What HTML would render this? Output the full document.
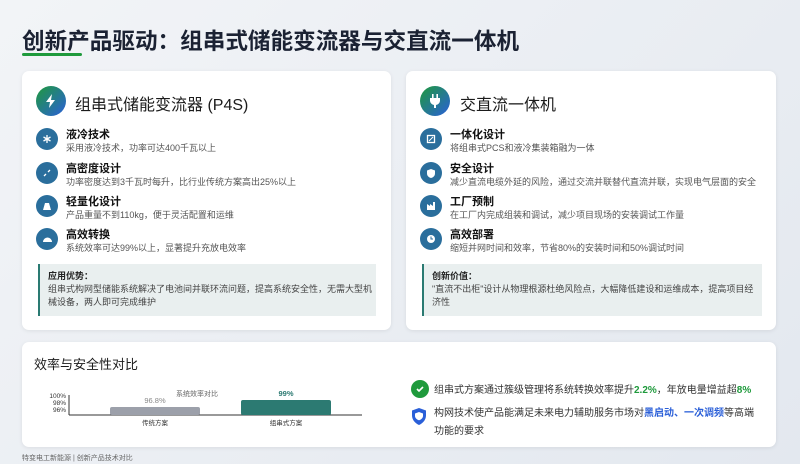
<!DOCTYPE html>
<html><head><meta charset="utf-8"><style>
*{margin:0;padding:0;box-sizing:border-box}
body{width:800px;height:464px;overflow:hidden;background:linear-gradient(135deg,#f2f4f7,#e3e8ef);font-family:"Liberation Sans","Noto Sans CJK SC",sans-serif;color:#222;position:relative}
.t{position:absolute;left:22px;top:23px;font-size:22.6px;font-weight:bold;color:#1b2233}
.ul{position:absolute;left:22px;top:53px;width:60px;height:3px;background:#1f9a3c;border-radius:2px}
.card{position:absolute;background:#fff;border-radius:7px;box-shadow:0 1px 4px rgba(0,0,0,.08)}
.hic{position:absolute;width:30px;height:30px;border-radius:50%;background:linear-gradient(135deg,#1f9a3c,#2a5fd8);display:flex;align-items:center;justify-content:center}
.h{position:absolute;font-size:16px;color:#1b1b1b}
.it{position:absolute;left:14px}
.ic{position:absolute;left:0;top:1px;width:22px;height:22px;border-radius:50%;background:#2a6e9c;display:flex;align-items:center;justify-content:center}
.it b{position:absolute;left:30px;top:-1px;font-size:11px;white-space:nowrap;color:#111}
.it span{position:absolute;left:30px;top:14px;font-size:9px;white-space:nowrap;color:#555}
.note{position:absolute;left:16px;top:193px;background:#e9efef;border-left:2px solid #2a7a72;padding:6px 2px 6px 8px;font-size:9px;color:#444;line-height:13px;height:52px}
.note b{color:#222}
</style></head><body>
<div class="t">创新产品驱动：组串式储能变流器与交直流一体机</div>
<div class="ul"></div>

<div class="card" style="left:22px;top:71px;width:369px;height:259px">
 <div class="hic" style="left:14px;top:15px"><svg width="14" height="16" viewBox="0 0 14 16"><path d="M8 1L2 9h4l-1 6 6-8H7z" fill="#fff"/></svg></div>
 <div class="h" style="left:53px;top:20px">组串式储能变流器 (P4S)</div>
 <div class="it" style="top:56px"><div class="ic"><svg width="10" height="10" viewBox="0 0 10 10" stroke="#fff" stroke-width="1.3"><path d="M5 1v8M1.5 3l7 4M8.5 3l-7 4"/></svg></div><b>液冷技术</b><span>采用液冷技术，功率可达400千瓦以上</span></div>
 <div class="it" style="top:90px"><div class="ic"><svg width="10" height="10" viewBox="0 0 10 10" stroke="#fff" stroke-width="1.3"><path d="M2 8l2-2M8 2L6 4"/></svg></div><b>高密度设计</b><span>功率密度达到3千瓦时每升，比行业传统方案高出25%以上</span></div>
 <div class="it" style="top:123px"><div class="ic"><svg width="10" height="10" viewBox="0 0 10 10"><path d="M3 2h4l2 7H1z" fill="#fff"/></svg></div><b>轻量化设计</b><span>产品重量不到110kg，便于灵活配置和运维</span></div>
 <div class="it" style="top:156px"><div class="ic"><svg width="11" height="10" viewBox="0 0 11 10"><path d="M1 8a4.5 4.5 0 0 1 9 0z" fill="#fff"/></svg></div><b>高效转换</b><span>系统效率可达99%以上，显著提升充放电效率</span></div>
 <div class="note" style="width:338px"><b>应用优势：</b><br>组串式构网型储能系统解决了电池间并联环流问题，提高系统安全性，无需大型机械设备，两人即可完成维护</div>
</div>

<div class="card" style="left:406px;top:71px;width:370px;height:259px">
 <div class="hic" style="left:14px;top:15px"><svg width="14" height="16" viewBox="0 0 14 16" fill="#fff"><rect x="4" y="1" width="1.6" height="4"/><rect x="8.4" y="1" width="1.6" height="4"/><path d="M2 5h10v3a5 5 0 0 1-4 4v3H6v-3a5 5 0 0 1-4-4z"/></svg></div>
 <div class="h" style="left:54px;top:20px">交直流一体机</div>
 <div class="it" style="top:56px"><div class="ic"><svg width="10" height="10" viewBox="0 0 10 10"><rect x="1.5" y="1.5" width="7" height="7" fill="none" stroke="#fff" stroke-width="1.3"/><path d="M3 7l4-4" stroke="#fff"/></svg></div><b>一体化设计</b><span>将组串式PCS和液冷集装箱融为一体</span></div>
 <div class="it" style="top:90px"><div class="ic"><svg width="10" height="11" viewBox="0 0 10 11"><path d="M5 1l4 1.5v3c0 2.5-2 4-4 4.5C3 9.5 1 8 1 5.5v-3z" fill="#fff"/></svg></div><b>安全设计</b><span>减少直流电缆外延的风险，通过交流并联替代直流并联，实现电气层面的安全</span></div>
 <div class="it" style="top:123px"><div class="ic"><svg width="10" height="10" viewBox="0 0 10 10"><path d="M1 9V3l3 2V3l3 2V1h2v8z" fill="#fff"/></svg></div><b>工厂预制</b><span>在工厂内完成组装和调试，减少项目现场的安装调试工作量</span></div>
 <div class="it" style="top:156px"><div class="ic"><svg width="10" height="10" viewBox="0 0 10 10"><circle cx="5" cy="5" r="4" fill="#fff"/><path d="M5 2.5V5h2" stroke="#2a6e9c" fill="none"/></svg></div><b>高效部署</b><span>缩短并网时间和效率，节省80%的安装时间和50%调试时间</span></div>
 <div class="note" style="width:340px"><b>创新价值：</b><br>"直流不出柜"设计从物理根源杜绝风险点，大幅降低建设和运维成本，提高项目经济性</div>
</div>

<div class="card" style="left:22px;top:342px;width:754px;height:105px">
 <div style="position:absolute;left:12px;top:12px;font-size:13px;color:#1b1b1b">效率与安全性对比</div>
 <svg style="position:absolute;left:0;top:40px" width="380" height="50" viewBox="0 0 380 50" font-family="Liberation Sans,Noto Sans CJK SC,sans-serif">
  <text x="175" y="14" font-size="7" fill="#666" text-anchor="middle">系统效率对比</text>
  <text x="44" y="16" font-size="6.5" fill="#333" text-anchor="end">100%</text>
  <text x="44" y="23" font-size="6.5" fill="#333" text-anchor="end">98%</text>
  <text x="44" y="30" font-size="6.5" fill="#333" text-anchor="end">96%</text>
  <line x1="47" y1="13" x2="47" y2="33" stroke="#333"/>
  <line x1="47" y1="33" x2="340" y2="33" stroke="#333"/>
  <rect x="88" y="25" width="90" height="8" rx="2" fill="#9ca0aa"/>
  <rect x="219" y="18" width="90" height="15" rx="2" fill="#2c7a72"/>
  <text x="133" y="21" font-size="7.5" fill="#888" text-anchor="middle">96.8%</text>
  <text x="264" y="14" font-size="7.5" fill="#2c7a72" text-anchor="middle" font-weight="bold">99%</text>
  <text x="133" y="43" font-size="6.5" fill="#333" text-anchor="middle">传统方案</text>
  <text x="264" y="43" font-size="6.5" fill="#333" text-anchor="middle">组串式方案</text>
 </svg>
 <div style="position:absolute;left:389px;top:38px;width:18px;height:18px;border-radius:50%;background:#1f9a3c;display:flex;align-items:center;justify-content:center"><svg width="10" height="10" viewBox="0 0 10 10"><path d="M2 5l2 2 4-4" stroke="#fff" stroke-width="1.6" fill="none"/></svg></div>
 <div style="position:absolute;left:412px;top:39px;font-size:10px;color:#333;white-space:nowrap">组串式方案通过簇级管理将系统转换效率提升<b style="color:#1f9a3c">2.2%</b>，年放电量增益超<b style="color:#1f9a3c">8%</b></div>
 <div style="position:absolute;left:389px;top:65px"><svg width="16" height="19" viewBox="0 0 16 19"><path d="M8 1l7 2.5v5C15 13 11.5 16.5 8 18 4.5 16.5 1 13 1 8.5v-5z" fill="#2a5fd8"/><path d="M8 5l4 1.5v2.5c0 2-1.8 3.6-4 4.3C5.8 12.6 4 11 4 9V6.5z" fill="#fff"/></svg></div>
 <div style="position:absolute;left:412px;top:63px;width:328px;font-size:10px;color:#333;line-height:18px">构网技术使产品能满足未来电力辅助服务市场对<b style="color:#2a5fd8">黑启动、一次调频</b>等高端功能的要求</div>
</div>
<div style="position:absolute;left:22px;top:453px;font-size:7px;color:#666">特变电工新能源 | 创新产品技术对比</div>
</body></html>
